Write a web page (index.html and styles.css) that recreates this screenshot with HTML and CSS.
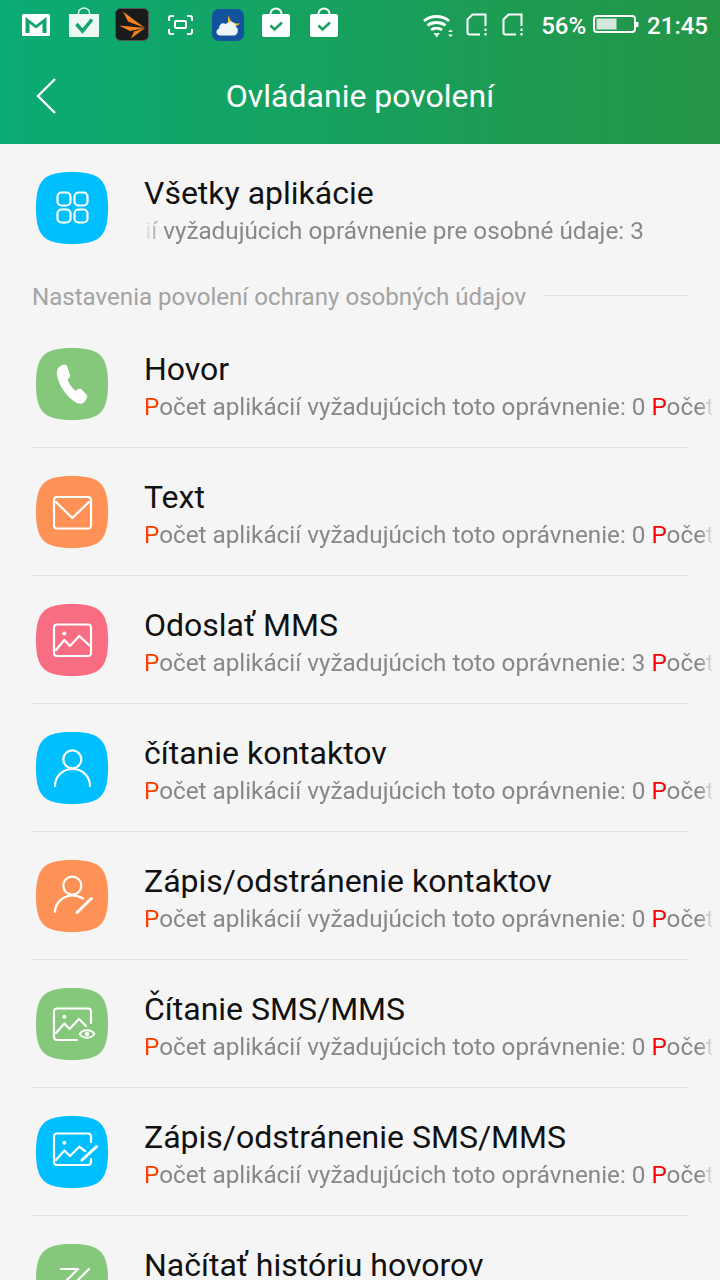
FILE: index.html
```html
<!DOCTYPE html>
<html lang="sk">
<head>
    <meta charset="UTF-8">
    <meta name="viewport" content="width=device-width, initial-scale=1.0">
    <title>Ovládanie povolení</title>
    <link rel="stylesheet" href="styles.css">
</head>
<body>

    <svg class="defs" width="0" height="0">
        <symbol id="squircle" viewBox="0 0 72 72">
            <path d="M36 0C64 0 72 8 72 36C72 64 64 72 36 72C8 72 0 64 0 36C0 8 8 0 36 0Z" fill="currentColor"/>
        </symbol>
        <symbol id="bag" viewBox="0 0 48 48">
            <path d="M18.500 15V13.500a5.500 5 0 0 1 11 0V15" fill="none" stroke="#fff" stroke-width="2"/>
            <rect x="10" y="14" width="28" height="23" rx="2" fill="#fff"/>
            <path d="M18.500 25.500L22.500 29.500L30 22.500" fill="none" stroke="#18a065" stroke-width="2.600"/>
        </symbol>
        <symbol id="sim" viewBox="0 0 24 24">
            <path d="M15 21.500H4.500a2 2 0 0 1-2-2V6.500L7.500 1.500H20.500V13" fill="none" stroke="#fff" stroke-width="2"/>
            <rect x="19.500" y="15.500" width="2" height="2.500" fill="#fff"/>
            <rect x="19.500" y="20" width="2" height="2.500" fill="#fff"/>
        </symbol>
    </svg>

    <header>
        <div class="status-bar">
            <div class="notif-icons">
                <svg class="slot" viewBox="0 0 48 48">
                    <rect x="10" y="14" width="28" height="22" rx="1.500" fill="#fff"/>
                    <path d="M13.500 17L24 25L34.500 17V33H30.500V23.500L24 28.500L17.500 23.500V33H13.500Z" fill="#12a56c"/>
                </svg>
                <svg class="slot" viewBox="0 0 48 48">
                    <path d="M18.500 15V13a5.500 5 0 0 1 11 0V15" fill="none" stroke="#e4f5ee" stroke-width="1.500"/>
                    <rect x="9" y="14" width="30" height="23" fill="#eef8f4"/>
                    <path d="M16.500 24L22.500 31L32 19.500" fill="none" stroke="#12a56c" stroke-width="3.500"/>
                </svg>
                <svg class="slot" viewBox="0 0 48 48">
                    <rect x="7.500" y="8.500" width="33" height="32" rx="5" fill="#1b1b1b" stroke="#555"/>
                    <path d="M15 11.500L37 28L20 21.500Z" fill="#f5821f"/>
                    <path d="M11 25.500L37 28L22 31Z" fill="#f5821f"/>
                    <path d="M23 38.500L37 28L26 31.500Z" fill="#f5821f"/>
                </svg>
                <svg class="slot" viewBox="0 0 48 48" fill="none" stroke="#fff" stroke-width="2">
                    <path d="M13 21V18a2 2 0 0 1 2-2H18M31 16H34a2 2 0 0 1 2 2V21M36 29V32a2 2 0 0 1-2 2H31M18 34H15a2 2 0 0 1-2-2V29"/>
                    <rect x="19" y="21" width="11" height="7" rx="1"/>
                </svg>
                <svg class="slot" viewBox="0 0 48 48">
                    <rect x="8" y="9" width="32" height="32" rx="7" fill="#12529f"/>
                    <path d="M25 15C25 21 30 25 36 23C34 27 27 27 24.500 23C23.500 20 24 17 25 15Z" fill="#f5c21b"/>
                    <path d="M16 35.500C12 35.500 11 30 15 28.500C15 24 19 22 22 24C25 20 32 22 32 27C35 28 34.500 35.500 30 35.500Z" fill="#eef3f6"/>
                </svg>
                <svg class="slot"><use href="#bag"/></svg>
                <svg class="slot"><use href="#bag"/></svg>
            </div>
            <div class="sys-icons">
                <svg class="wifi" viewBox="0 0 32 24" fill="none" stroke="#fff" stroke-width="2.800">
                    <path d="M3 6C10 0 21 0 28 6M6.500 10.500C11.500 6.500 19.500 6.500 24.500 10.500M10 15C13 12.500 18 12.500 21 15"/>
                    <path d="M12.500 18H19L15.700 22.500Z" fill="#fff" stroke="none"/>
                    <path d="M27 17L29.500 14.500L32 17ZM27 19.500L29.500 22L32 19.500Z" fill="#fff" stroke="none"/>
                </svg>
                <svg class="sim"><use href="#sim"/></svg>
                <svg class="sim"><use href="#sim"/></svg>
                <span class="percent">56%</span>
                <svg class="battery" viewBox="0 0 46 18">
                    <rect x="1" y="1" width="41" height="16" rx="3" fill="none" stroke="#fff" stroke-width="2"/>
                    <rect x="3.500" y="3.500" width="20" height="11" fill="#d2e9dc"/>
                    <rect x="43" y="7" width="2.500" height="5" fill="#fff"/>
                </svg>
                <span class="clock">21:45</span>
            </div>
        </div>
        <div class="toolbar">
            <svg class="back" viewBox="0 0 24 40" fill="none" stroke="#fff" stroke-width="2.400">
                <path d="M20 3L3 20L20 37"/>
            </svg>
            <h1>Ovládanie povolení</h1>
        </div>
    </header>

    <main>
        <div class="row row-all">
            <svg class="perm-icon blue" viewBox="0 0 72 72">
                <use href="#squircle" width="72" height="72"/>
                <g fill="none" stroke="#fff" stroke-width="2.200">
                    <rect x="21.500" y="20.500" width="13" height="13" rx="4"/>
                    <rect x="38.500" y="20.500" width="13" height="13" rx="4"/>
                    <rect x="21.500" y="37.500" width="13" height="13" rx="4"/>
                    <rect x="38.500" y="37.500" width="13" height="13" rx="4"/>
                </g>
            </svg>
            <div class="row-text">
                <div class="row-title">Všetky aplikácie</div>
                <div class="row-sub scrolled"><span>Počet aplikácií vyžadujúcich oprávnenie pre osobné údaje: 3</span></div>
            </div>
        </div>

        <div class="section-label">
            <span>Nastavenia povolení ochrany osobných údajov</span>
        </div>

        <div class="row">
            <svg class="perm-icon green" viewBox="0 0 72 72">
                <use href="#squircle" width="72" height="72"/>
                <path d="M23.500 18.500C26 16.500 30 16 31 18L34 27C34.500 29 33 30 31.500 31.500C33 36 36 40 39.500 43C41 41.500 43 40 45 41L50.500 46.500C52 48 51 50.500 49 53C47 56 44 56.500 41 55C31 50 23 38 21 27C20.500 23 21.500 20 23.500 18.500Z" fill="#fff"/>
            </svg>
            <div class="row-text">
                <div class="row-title">Hovor</div>
                <div class="row-sub"><b class="p1">P</b>očet aplikácií vyžadujúcich toto oprávnenie: 0 <b class="p2">P</b>očet aplikácií</div>
            </div>
        </div>

        <div class="row">
            <svg class="perm-icon orange" viewBox="0 0 72 72">
                <use href="#squircle" width="72" height="72"/>
                <g class="line-art">
                    <rect x="18" y="21" width="37" height="31.500" rx="3"/>
                    <path d="M20 26L36.300 42L53 26"/>
                </g>
            </svg>
            <div class="row-text">
                <div class="row-title">Text</div>
                <div class="row-sub"><b class="p1">P</b>očet aplikácií vyžadujúcich toto oprávnenie: 0 <b class="p2">P</b>očet aplikácií</div>
            </div>
        </div>

        <div class="row">
            <svg class="perm-icon pink" viewBox="0 0 72 72">
                <use href="#squircle" width="72" height="72"/>
                <g class="line-art">
                    <rect x="18" y="20.500" width="37" height="31.500" rx="3"/>
                    <path d="M20 46L28.300 36L34 42L43.300 32L54 42"/>
                </g>
                <circle cx="28.300" cy="29.500" r="2" fill="#fff"/>
            </svg>
            <div class="row-text">
                <div class="row-title">Odoslať MMS</div>
                <div class="row-sub"><b class="p1">P</b>očet aplikácií vyžadujúcich toto oprávnenie: 3 <b class="p2">P</b>očet aplikácií</div>
            </div>
        </div>

        <div class="row">
            <svg class="perm-icon blue" viewBox="0 0 72 72">
                <use href="#squircle" width="72" height="72"/>
                <g class="line-art">
                    <circle cx="36.300" cy="27.300" r="9"/>
                    <path d="M19 54C19 44 27 37 36.500 37C46 37 54 44 54 54"/>
                </g>
            </svg>
            <div class="row-text">
                <div class="row-title">čítanie kontaktov</div>
                <div class="row-sub"><b class="p1">P</b>očet aplikácií vyžadujúcich toto oprávnenie: 0 <b class="p2">P</b>očet aplikácií</div>
            </div>
        </div>

        <div class="row">
            <svg class="perm-icon orange" viewBox="0 0 72 72">
                <use href="#squircle" width="72" height="72"/>
                <g class="line-art">
                    <circle cx="36.300" cy="25.700" r="9"/>
                    <path d="M19 52C19 43 27 35.500 36.500 35.500C40 35.500 44 36.500 47 38.500"/>
                    <path d="M41 52.500L55.500 38.500" stroke-width="3"/>
                </g>
            </svg>
            <div class="row-text">
                <div class="row-title">Zápis/odstránenie kontaktov</div>
                <div class="row-sub"><b class="p1">P</b>očet aplikácií vyžadujúcich toto oprávnenie: 0 <b class="p2">P</b>očet aplikácií</div>
            </div>
        </div>

        <div class="row">
            <svg class="perm-icon green" viewBox="0 0 72 72">
                <use href="#squircle" width="72" height="72"/>
                <g class="line-art">
                    <path d="M41 52H21a3 3 0 0 1-3-3V23.500a3 3 0 0 1 3-3H52a3 3 0 0 1 3 3V35"/>
                    <path d="M20 45L28.300 35.500L33.500 41L43 31L50 38"/>
                    <path d="M43.500 46C47 41 55 41 58.500 46C55 51 47 51 43.500 46Z" stroke-width="1.800"/>
                </g>
                <circle cx="28.300" cy="28.800" r="2" fill="#fff"/>
                <circle cx="51" cy="46" r="2.200" fill="#fff"/>
            </svg>
            <div class="row-text">
                <div class="row-title">Čítanie SMS/MMS</div>
                <div class="row-sub"><b class="p1">P</b>očet aplikácií vyžadujúcich toto oprávnenie: 0 <b class="p2">P</b>očet aplikácií</div>
            </div>
        </div>

        <div class="row">
            <svg class="perm-icon blue" viewBox="0 0 72 72">
                <use href="#squircle" width="72" height="72"/>
                <g class="line-art">
                    <path d="M55 43V46a3 3 0 0 1-3 3H21a3 3 0 0 1-3-3V20.500a3 3 0 0 1 3-3H52a3 3 0 0 1 3 3V26"/>
                    <path d="M20 44L28.300 34.500L34 40L43.300 30.700L49 35"/>
                    <path d="M46 44L60.500 30.700" stroke-width="3"/>
                </g>
                <circle cx="28.300" cy="26.700" r="2" fill="#fff"/>
            </svg>
            <div class="row-text">
                <div class="row-title">Zápis/odstránenie SMS/MMS</div>
                <div class="row-sub"><b class="p1">P</b>očet aplikácií vyžadujúcich toto oprávnenie: 0 <b class="p2">P</b>očet aplikácií</div>
            </div>
        </div>

        <div class="row">
            <svg class="perm-icon green" viewBox="0 0 72 72">
                <use href="#squircle" width="72" height="72"/>
                <g class="line-art">
                    <path d="M25 25H42L27 40"/>
                    <path d="M53 25L38 40"/>
                </g>
            </svg>
            <div class="row-text">
                <div class="row-title">Načítať históriu hovorov</div>
                <div class="row-sub"><b class="p1">P</b>očet aplikácií vyžadujúcich toto oprávnenie: 0 <b class="p2">P</b>očet aplikácií</div>
            </div>
        </div>
    </main>

</body>
</html>
```

FILE: styles.css
```css
html, body {
    margin: 0;
    height: 1280px;
    overflow: hidden;
}

body {
    font-family: Roboto, "Noto Sans", sans-serif;
    background-color: #f5f5f5;
}

.defs {
    position: absolute;
}

header {
    height: 144px;
    color: white;
    background: linear-gradient(to right, #0aab74, #259545);
}

.status-bar {
    height: 48px;
    display: flex;
    justify-content: space-between;
    padding: 0 12px;
}

.notif-icons {
    display: flex;
}

.slot {
    width: 48px;
    height: 48px;
}

.sys-icons {
    display: flex;
    align-items: center;
    font-size: 24px;
    font-weight: 500;
}

.wifi {
    width: 32px;
    height: 24px;
    margin-top: 5px;
}

.sim {
    width: 24px;
    height: 24px;
    margin-left: 12px;
    margin-top: 1px;
}

.percent {
    margin-left: 16px;
    margin-top: 4px;
}

.battery {
    width: 46px;
    height: 18px;
    margin-left: 7px;
}

.clock {
    margin-left: 8px;
    margin-top: 4px;
}

.toolbar {
    height: 96px;
    position: relative;
    display: flex;
    align-items: center;
    justify-content: center;
}

.toolbar h1 {
    margin: 0;
    font-size: 32px;
    font-weight: 400;
}

.back {
    position: absolute;
    left: 35px;
    top: 28px;
    width: 24px;
    height: 40px;
}

.row {
    display: flex;
    align-items: center;
    gap: 36px;
    height: 127px;
    margin: 0 32px;
    padding-left: 4px;
    border-bottom: 1px solid #e0e0e0;
}

.row-all {
    height: 128px;
    border-bottom: none;
}

.perm-icon {
    flex: none;
    width: 72px;
    height: 72px;
}

.blue { color: #00bffe; }
.green { color: #85c87c; }
.orange { color: #fe9155; }
.pink { color: #f96d82; }

.line-art {
    fill: none;
    stroke: #fff;
    stroke-width: 2.200;
    stroke-linecap: round;
    stroke-linejoin: round;
}

.row-text {
    flex: none;
    width: 570px;
    padding-top: 8px;
    overflow: hidden;
}

.row-title {
    font-size: 32px;
    line-height: 38px;
    color: #111;
    white-space: nowrap;
}

.row-sub {
    font-size: 24.25px;
    line-height: 38px;
    color: #888;
    white-space: nowrap;
    overflow: hidden;
    mask-image: linear-gradient(to right, #000 97.5%, transparent);
}

.row-sub b {
    font-weight: 400;
}

.p1 { color: #ff3d00; }
.p2 { color: #ff0000; }

.row-sub.scrolled {
    mask-image: linear-gradient(to right, transparent, #000 20px);
}

.row-sub.scrolled span {
    margin-left: -144px;
}

.section-label {
    display: flex;
    align-items: center;
    gap: 18px;
    height: 48px;
    margin: 0 32px;
    font-size: 24.1px;
    color: #a3a3a3;
    white-space: nowrap;
}

.section-label span {
    margin-top: 2px;
}

.section-label::after {
    content: "";
    flex: 1;
    height: 1px;
    margin-bottom: 2px;
    background-color: #e0e0e0;
}
```
